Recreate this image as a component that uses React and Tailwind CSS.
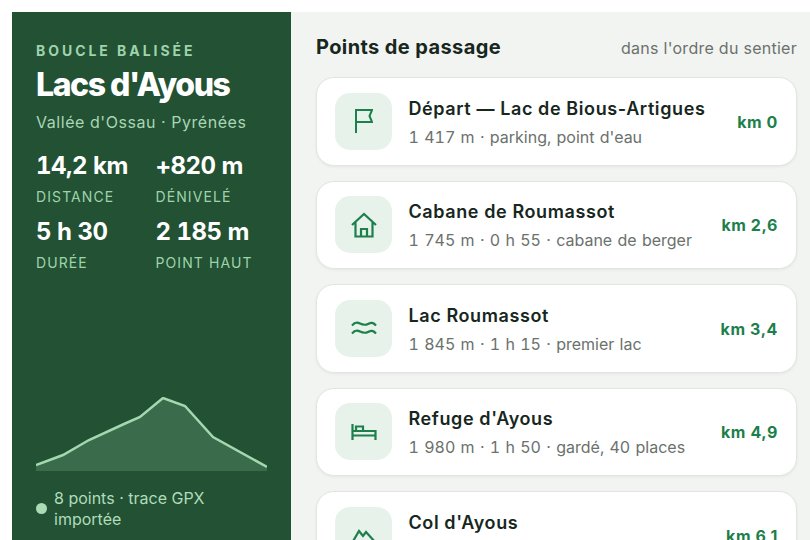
import React from "react";

const Flag = () => (
  <svg width="18" height="24" viewBox="0 0 18 24" fill="none" stroke="currentColor" strokeWidth="2" strokeLinejoin="miter">
    <path d="M1 24V1h16l-2.500 6 2.500 6H1" />
  </svg>
);
const Home = () => (
  <svg width="26" height="26" viewBox="0 0 26 26" fill="none" stroke="currentColor" strokeWidth="2.200">
    <path d="M1 13 13 2l12 11M4.500 10.500V24.500h17V10.500M10 24.500V17h6v7.500" />
  </svg>
);
const Waves = () => (
  <svg width="26" height="16" viewBox="0 0 26 16" fill="none" stroke="currentColor" strokeWidth="2.200">
    <path d="M1 5.500c3-3.500 5-3.500 8-2s5 2 8 .5 5-2 8 1.500M1 13.500c3-3.500 5-3.500 8-2s5 2 8 .5 5-2 8 1.500" />
  </svg>
);
const Bed = () => (
  <svg width="26" height="16" viewBox="0 0 26 16" fill="none" stroke="currentColor" strokeWidth="2.200">
    <path d="M1.500 0v16M1.500 11.500h23M24.500 16V7H1.500M5 7V2.500h7V7" />
  </svg>
);
const Peak = () => (
  <svg width="26" height="20" viewBox="0 0 26 20" fill="none" stroke="currentColor" strokeWidth="2.200">
    <path d="M1 18 8 6l4 5 3-4 10 11" />
  </svg>
);

const points = [
  { icon: <Flag />, t: "Départ — Lac de Bious-Artigues", s: "1 417 m · parking, point d'eau", k: "km 0" },
  { icon: <Home />, t: "Cabane de Roumassot", s: "1 745 m · 0 h 55 · cabane de berger", k: "km 2,6" },
  { icon: <Waves />, t: "Lac Roumassot", s: "1 845 m · 1 h 15 · premier lac", k: "km 3,4" },
  { icon: <Bed />, t: "Refuge d'Ayous", s: "1 980 m · 1 h 50 · gardé, 40 places", k: "km 4,9" },
  { icon: <Peak />, t: "Col d'Ayous", s: "2 185 m · 2 h 40 · point haut", k: "km 6,1" },
];

const stats = [
  ["14,2 km", "DISTANCE"],
  ["+820 m", "DÉNIVELÉ"],
  ["5 h 30", "DURÉE"],
  ["2 185 m", "POINT HAUT"],
];

export default function App() {
  return (
    <div className="h-[540px] w-[810px] overflow-hidden bg-white pl-3 pt-3 flex font-['Inter',sans-serif]">
      <aside className="w-[279px] h-[540px] shrink-0 bg-[#225133] pl-6 pr-6 pt-[30px] flex flex-col">
        <div className="text-[14px] leading-[17px] font-bold tracking-[2.950px] text-[#9fd3ac]">BOUCLE BALISÉE</div>
        <h1 className="mt-[8px] text-[32px] leading-[36px] font-extrabold tracking-[-0.045em] text-white">Lacs d'Ayous</h1>
        <div className="mt-[9px] text-[16px] leading-[20px] tracking-[0.55px] text-[#a9d6b4]">Vallée d'Ossau · Pyrénées</div>
        <div className="mt-[20px] grid grid-cols-[119.500px_1fr] gap-y-[13px]">
          {stats.map(([v, l]) => (
            <div key={l}>
              <div className="text-[24px] leading-[28px] font-bold tabular-nums text-white tracking-[-0.02em]">{v}</div>
              <div className="mt-[8px] text-[14px] leading-[17px] tracking-[1.100px] text-[#9fd3ac]">{l}</div>
            </div>
          ))}
        </div>
        <svg className="mt-[126px] block shrink-0" width="231" height="74" viewBox="0 0 231 74">
          <path d="M0 68 L27 58 L53 43 L88 27 L104 20 L127 1 L149 9 L177 40 L231 70 L231 74 L0 74 Z" fill="#3a6b4a" />
          <path d="M0 68 L27 58 L53 43 L88 27 L104 20 L127 1 L149 9 L177 40 L231 70" fill="none" stroke="#a4d8b0" strokeWidth="2.500" />
        </svg>
        <div className="mt-[16.500px] flex items-center gap-[7px] text-[16px] leading-[21px] text-[#b0dcba]">
          <span className="w-[11px] h-[11px] rounded-full bg-[#a9dcb5] shrink-0" />
          <span>8 points · trace GPX importée</span>
        </div>
      </aside>
      <main className="flex-1 bg-[#f2f4f1] pl-[25px] pr-[13px] pt-[22px] overflow-hidden">
        <div className="flex items-center justify-between h-[26px]">
          <h2 className="text-[20px] font-bold tracking-[0.4px] text-[#17271d]">Points de passage</h2>
          <span className="text-[16px] tracking-[0.27px] mt-[2px] text-[#6b716d]">dans l'ordre du sentier</span>
        </div>
        <div className="mt-[17px] flex flex-col gap-[15px]">
          {points.map((p) => (
            <div key={p.t} className="h-[88.500px] shrink-0 rounded-[18px] bg-white border border-[#e2e5e2] shadow-[0_1px_3px_rgba(0,0,0,0.06)] pl-[18px] pr-[18px] flex items-center">
              <div className="w-[57px] h-[57px] rounded-[15px] bg-[#e6f2ea] text-[#1d7f4b] flex items-center justify-center shrink-0">{p.icon}</div>
              <div className="ml-[16.500px] flex-1 min-w-0 pt-[1px]">
                <div className="text-[18px] leading-[24px] font-semibold tracking-[0.6px] text-[#17271d]">{p.t}</div>
                <div className="mt-[6px] text-[16px] leading-[20px] [word-spacing:1px] tabular-nums text-[#6b716d]">{p.s}</div>
              </div>
              <div className="text-[16px] font-bold tracking-[0.6px] pt-[1px] text-[#1d7f4b]">{p.k}</div>
            </div>
          ))}
        </div>
      </main>
    </div>
  );
}
